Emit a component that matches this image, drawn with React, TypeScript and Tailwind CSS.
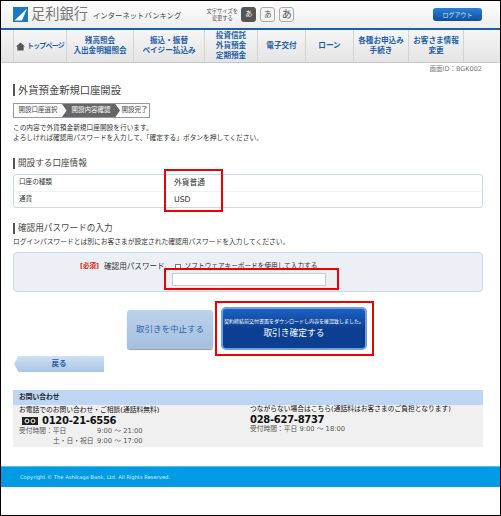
import React from 'react';

const font = "[font-family:'DejaVu_Sans','Noto_Sans_CJK_JP',sans-serif]";

const navItems = [
  { w: 'w-[67px]', lines: ['残高照会', '入出金明細照会'] },
  { w: 'w-[71px]', lines: ['振込・振替', 'ペイジー払込み'] },
  { w: 'w-[53px]', lines: ['投資信託', '外貨預金', '定期預金'] },
  { w: 'w-[48px]', lines: ['電子交付'] },
  { w: 'w-[48px]', lines: ['ローン'] },
  { w: 'w-[55px]', lines: ['各種お申込み', '手続き'] },
  { w: 'w-[55px]', lines: ['お客さま情報', '変更'] },
];

const Heading = ({ children }: { children: React.ReactNode }) => (
  <div className="flex items-center border-l-2 border-[#555] pl-[3px] h-[11px] text-[8.6px] leading-[11px] text-[#444]">
    {children}
  </div>
);

const RedBox = ({ className }: { className: string }) => (
  <div className={`absolute border-[2px] border-[#f00000] ${className}`}></div>
);

const App: React.FC = () => {
  return (
    <div className={`relative w-[501px] h-[516px] border border-black bg-white overflow-hidden ${font}`}>
      {/* header */}
      <div className="h-[27px] flex items-center pl-[12px] pr-[18px] bg-gradient-to-b from-white to-[#ededed]">
        <svg width="15" height="15" viewBox="0 0 15 15">
          <rect width="15" height="15" fill="#1c78c0" />
          <path d="M1.5 13.5 L14 1.5 L9 13.5 Z" fill="#fff" />
        </svg>
        <span className="ml-[3px] text-[14.25px] leading-none text-[#777]">足利銀行</span>
        <span className="ml-[5px] mt-[3px] text-[7.35px] leading-none text-[#444]">インターネットバンキング</span>
        <div className="ml-[25px] w-[32px] text-center text-[5.3px] leading-[7px] text-[#555] whitespace-nowrap">
          文字サイズを
          <br />
          変更する
        </div>
        <div className="ml-[3px] flex items-center gap-[4px]">
          <div className="w-[15px] h-[15px] rounded-[3px] bg-[#555] text-white text-[7px] flex items-center justify-center">あ</div>
          <div className="w-[15px] h-[15px] rounded-[3px] border border-[#aaa] bg-[#f4f4f4] text-[#555] text-[7.5px] flex items-center justify-center">あ</div>
          <div className="w-[15px] h-[15px] rounded-[3px] border border-[#aaa] bg-[#f4f4f4] text-[#555] text-[10px] flex items-center justify-center">あ</div>
        </div>
        <div className="ml-auto w-[49px] h-[13px] rounded-[3px] bg-gradient-to-b from-[#2d7fd6] to-[#0d4da0] text-[6px] text-[#cfe2f7] flex items-center justify-center">
          ログアウト
        </div>
      </div>
      <div className="h-[2px] bg-[#1a5fae]"></div>

      {/* nav */}
      <div className="h-[33px] pl-[12px] flex bg-gradient-to-b from-[#f6f6f6] to-[#e4e4e4] border-b border-[#c8c8c8] text-[#1f5fa8] text-[7.6px] leading-[10px] font-bold">
        <div className="w-[53px] border-l border-[#d4d4d4] flex items-center justify-center gap-[2px]">
          <svg width="9" height="9" viewBox="0 0 10 10">
            <path d="M5 0.5 L10 5 L8.5 5 L8.5 9.5 L1.5 9.5 L1.5 5 L0 5 Z" fill="#555" />
          </svg>
          <span className="whitespace-nowrap text-[7px] tracking-[-0.8px]">トップページ</span>
        </div>
        {navItems.map((item) => (
          <div key={item.lines[0]} className={`${item.w} border-l border-[#d4d4d4] flex flex-col items-center justify-center`}>
            {item.lines.map((line) => (
              <span key={line} className="whitespace-nowrap">{line}</span>
            ))}
          </div>
        ))}
        <div className="w-px bg-[#d4d4d4]"></div>
      </div>

      {/* content */}
      <div className="px-[12px]">
        <div className="h-[12px] pr-[6px] text-right text-[6.5px] leading-[12px] text-[#777]">画面ID：BGK002</div>

        <div className="mt-[9px] flex items-center border-l-2 border-[#555] pl-[3px] h-[12px] text-[10.3px] leading-[12px] text-[#444]">
          外貨預金新規口座開設
        </div>

        <div className="mt-[7px] w-[137px] h-[15px] border border-[#999] flex items-center text-[6.5px] text-[#444]">
          <span className="w-[48px] text-center whitespace-nowrap">開設口座選択</span>
          <span className="w-[58px] h-full bg-[#666] text-white flex items-center justify-center whitespace-nowrap [clip-path:polygon(0_0,92%_0,100%_50%,92%_100%,0_100%,8%_50%)]">開設内容確認</span>
          <span className="flex-1 text-center whitespace-nowrap">開設完了</span>
        </div>

        <p className="mt-[5px] text-[6.7px] leading-[10px] text-[#333] whitespace-nowrap">
          この内容で外貨預金新規口座開設を行います。
          <br />
          よろしければ確認用パスワードを入力して、「確定する」ボタンを押してください。
        </p>

        <div className="mt-[15px]">
          <Heading>開設する口座情報</Heading>
        </div>

        <div className="mt-[5px] w-[470px] h-[34px] rounded-[3px] border border-[#c5d9ef] text-[#333]">
          <div className="h-[17px] flex items-center border-b border-[#edf2f8]">
            <span className="w-[160px] pl-[5px] text-[6.6px]">口座の種類</span>
            <span className="text-[7.75px]">外貨普通</span>
          </div>
          <div className="h-[15px] flex items-center">
            <span className="w-[160px] pl-[5px] text-[6.6px]">通貨</span>
            <span className="text-[7.75px]">USD</span>
          </div>
        </div>

        <div className="mt-[15px]">
          <Heading>確認用パスワードの入力</Heading>
        </div>
        <p className="mt-[3px] text-[6.75px] leading-[10px] text-[#333] whitespace-nowrap">
          ログインパスワードとは別にお客さまが設定された確認用パスワードを入力してください。
        </p>

        <div className="mt-[5px] w-[470px] h-[40px] rounded-[4px] border border-[#c5d9ef] bg-[#eceff3] pl-[66px]">
          <div className="mt-[9px] h-[9px] flex items-center whitespace-nowrap">
            <span className="text-[6.5px] font-bold text-[#e02020]">[必須]</span>
            <span className="ml-[5px] text-[7.6px] text-[#333]">確認用パスワード</span>
            <span className="ml-[10px] w-[6px] h-[6px] border border-[#777] bg-white"></span>
            <span className="ml-[4px] text-[6.65px] text-[#333]">ソフトウェアキーボードを使用して入力する</span>
          </div>
          <div className="ml-[92px] mt-[2px] w-[154px] h-[13px] bg-white border border-[#ccc]"></div>
        </div>

        {/* buttons */}
        <div className="mt-[15px] h-[43px] pl-[114px] flex items-start gap-[8px]">
          <div className="mt-[3px] w-[86px] h-[39px] rounded-[3px] bg-gradient-to-b from-[#bdd2ea] to-[#a4bfdf] text-[8.5px] text-[#2a66b0] flex items-center justify-center shadow-[0_1px_1px_#999]">
            取引きを中止する
          </div>
          <div className="w-[146px] h-[43px] rounded-[5px] border-2 border-[#6f9fdc] bg-gradient-to-b from-[#1b62c4] via-[#0c3f92] to-[#0c3f92] text-white flex flex-col items-center justify-center">
            <span className="text-[5px] leading-[7px] whitespace-nowrap">契約締結前交付書面をダウンロードし内容を確認致しました。</span>
            <span className="mt-[3px] text-[8.75px] leading-[11px]">取引き確定する</span>
          </div>
        </div>

        <div className="mt-[6px] ml-[1px] w-[90px] h-[16px] bg-gradient-to-b from-[#cfe0f3] to-[#a9c5e6] [clip-path:polygon(5%_0,100%_0,100%_100%,5%_100%,0_50%)] text-[7.5px] font-bold text-[#2a5f9e] flex items-center justify-center">
          戻る
        </div>

        {/* contact */}
        <div className="mt-[18px] w-[470px] h-[57px] bg-[#f0f0f0]">
          <div className="h-[15px] pl-[6px] bg-[#bcd6f4] text-[6.75px] font-bold leading-[15px] text-[#222]">お問い合わせ</div>
          <div className="flex pl-[6px]">
            <div className="w-[231px]">
              <div className="text-[6.75px] leading-[10px] text-[#111]">お電話でのお問い合わせ・ご相談(通話料無料)</div>
              <div className="h-[11px] flex items-center">
                <svg width="16" height="8" viewBox="0 0 16 8" className="ml-[3px]">
                  <rect width="16" height="8" fill="#222" />
                  <circle cx="5" cy="4" r="2" fill="none" stroke="#fff" />
                  <circle cx="11" cy="4" r="2" fill="none" stroke="#fff" />
                </svg>
                <span className="ml-[4px] text-[10px] tracking-[-0.3px] font-bold leading-[11px] text-[#111]">0120-21-6556</span>
              </div>
              <div className="flex text-[6.75px] leading-[10px] text-[#555]">
                <span className="w-[78px] whitespace-nowrap">受付時間：平日</span>
                <span>9:00 ～ 21:00</span>
              </div>
              <div className="flex text-[6.75px] leading-[10px] text-[#555]">
                <span className="w-[78px] pl-[34px] whitespace-nowrap">土・日・祝日</span>
                <span>9:00 ～ 17:00</span>
              </div>
            </div>
            <div>
              <div className="text-[6.75px] leading-[9px] text-[#111] whitespace-nowrap">つながらない場合はこちら(通話料はお客さまのご負担となります)</div>
              <div className="text-[10px] tracking-[-0.3px] font-bold leading-[11px] text-[#111]">028-627-8737</div>
              <div className="text-[6.75px] leading-[9px] text-[#555]">受付時間：平日 9:00 ～ 18:00</div>
            </div>
          </div>
        </div>
      </div>

      {/* footer */}
      <div className="mt-[19px] h-[21px] pl-[19px] bg-[#009be4] border-t border-[#5cbcec] text-[5.2px] leading-[20px] text-[#d8effb]">
        Copyright © The Ashikaga Bank, Ltd. All Rights Reserved.
      </div>

      {/* red annotation boxes */}
      <RedBox className="left-[163px] top-[168px] w-[59px] h-[43px]" />
      <RedBox className="left-[163px] top-[267px] w-[175px] h-[22px]" />
      <RedBox className="left-[214px] top-[300px] w-[159px] h-[55px]" />
    </div>
  );
};

export default App;
